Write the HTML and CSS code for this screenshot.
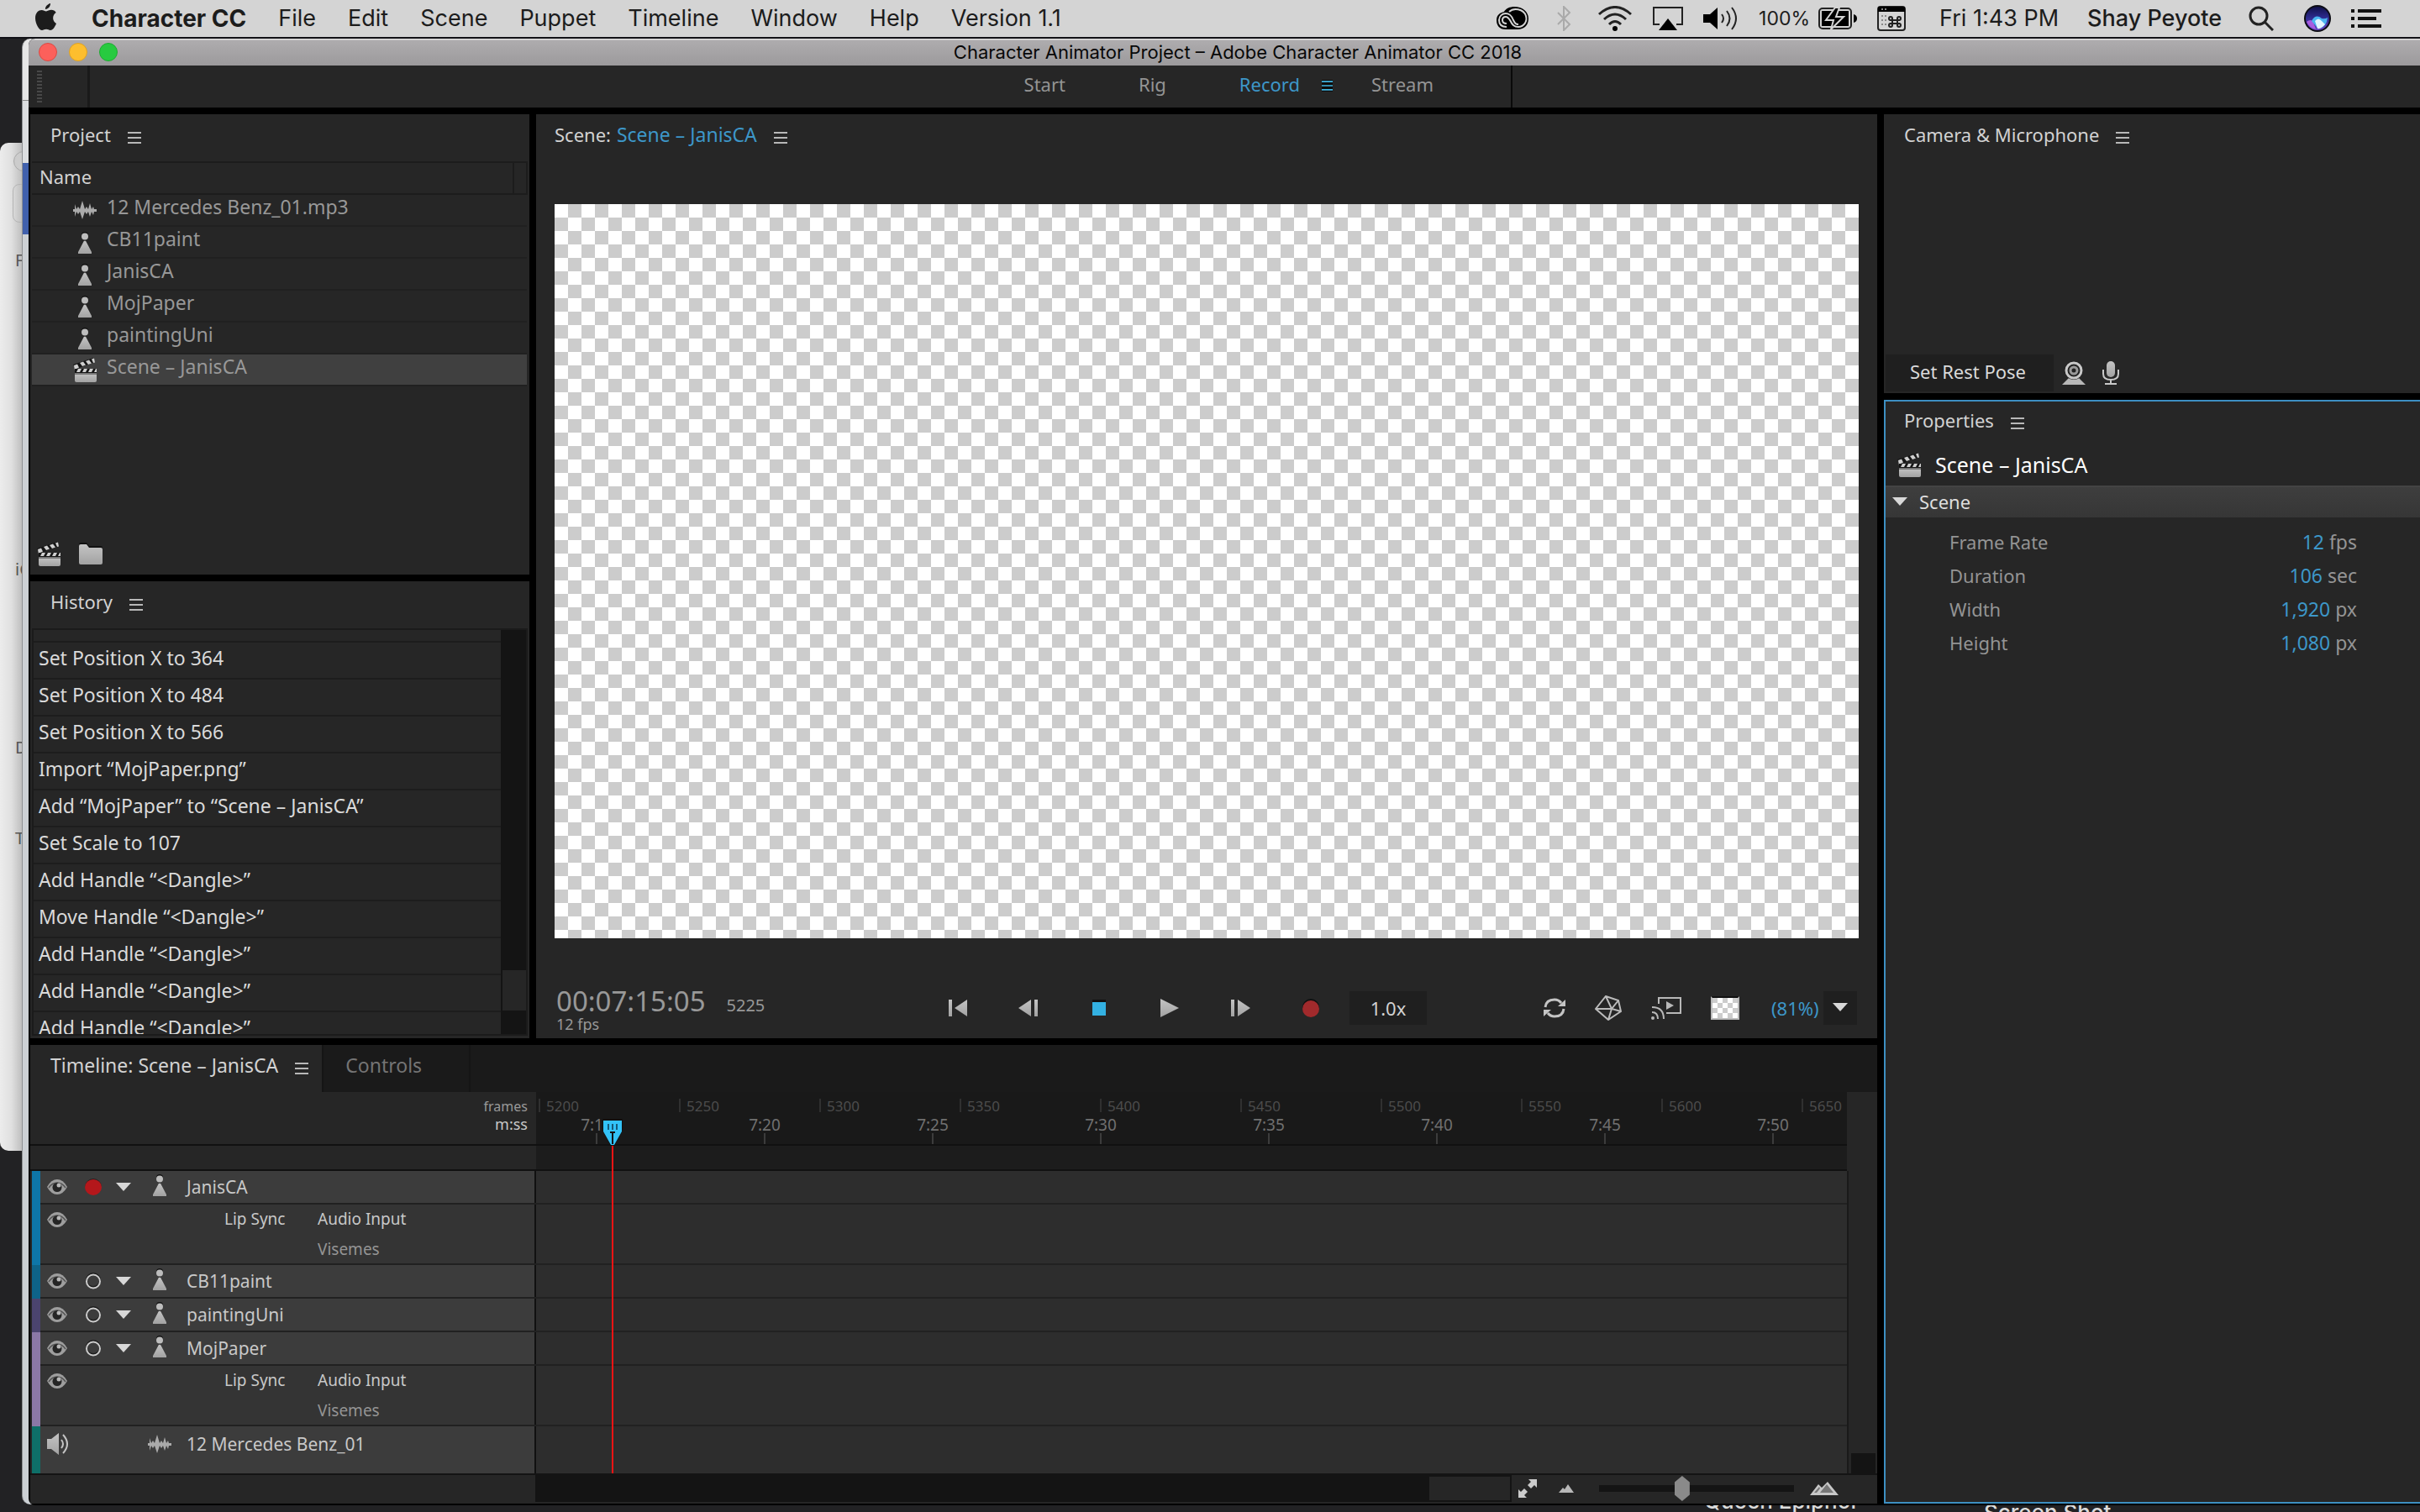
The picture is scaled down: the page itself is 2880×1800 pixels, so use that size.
FILE: index.html
```html
<!DOCTYPE html>
<html lang="en">
<head>
    <meta charset="UTF-8">
    <meta name="viewport" content="width=device-width, initial-scale=1.0">
    <title>Character Animator Project – Adobe Character Animator CC 2018</title>
    <link rel="stylesheet" href="styles.css">
</head>
<body>
<!-- Shared icons -->
<svg class="sprite" aria-hidden="true">
    <defs>
        <linearGradient id="metal" x1="0" y1="0" x2="0" y2="1">
            <stop offset="0" stop-color="#c4c4c4"/>
            <stop offset="1" stop-color="#a2a2a2"/>
        </linearGradient>
        <linearGradient id="siri" x1="0" y1="0" x2="0" y2="1">
            <stop offset="0" stop-color="#10104a"/>
            <stop offset="0.45" stop-color="#2c2a8c"/>
            <stop offset="1" stop-color="#6a48c8"/>
        </linearGradient>
    </defs>
    <symbol id="menu" viewBox="0 0 16 14">
        <path d="M0 1h16M0 7h16M0 13h16" stroke="currentColor" stroke-width="2"/>
    </symbol>
    <symbol id="puppet" viewBox="0 0 16 26">
        <circle cx="8" cy="4" r="4" fill="#111"/>
        <path d="M8 8.500L16 25H0z" fill="#151515"/>
        <circle cx="8" cy="5.500" r="4" fill="#bdbdbd"/>
        <path d="M8 10.500c1 0 1.500.8 2 2L16 24v2H0v-2l6-11.500c.5-1.200 1-2 2-2z" fill="url(#metal)"/>
    </symbol>
    <symbol id="wave" viewBox="0 0 28 22">
        <path d="M0 10h2V4l2 6 2-3 2 3 3-10 3 10 2-3 2 3 2-7 2 7 2-3 1 3h3v3h-3l-1 4-2-4-2 6-2-6-2 3-2-3-3 9-3-9-2 3-2-3-2 6v-6H0z" fill="#aaa"/>
    </symbol>
    <symbol id="clapper" viewBox="0 0 28 30">
        <path d="M0 9L24 1l2 5L4 14z" fill="#151515"/>
        <path d="M1 10l4-1.500 2 4L4 14v2H2zM8 7l4-1.500 3 4-4 1.500zM15 5l4-1.500 3 4-4 1.500zM22 2.500L25 1.500l1 5-2 .5z" fill="#d0d0d0"/>
        <path d="M2 14h26v5H2z" fill="#151515"/>
        <path d="M6 14h4l-2 4H4zM13 14h4l-2 4h-4zM20 14h4l-2 4h-4zM27 14h1v4h-3z" fill="#d0d0d0"/>
        <path d="M2 19h26v9q0 2-2 2H4q-2 0-2-2z" fill="url(#metal)"/>
        <path d="M2 19h26v2H2z" fill="#777"/>
    </symbol>
    <symbol id="eye" viewBox="0 0 24 18">
        <path d="M0 9Q5 0 12 0t12 9q-5 9-12 9T0 9z" fill="#9e9e9e"/>
        <path d="M2 10q4-6 10-6t10 6" fill="none" stroke="#555" stroke-width="1.500"/>
        <circle cx="12" cy="9.500" r="5.500" fill="#252525"/>
        <circle cx="14" cy="7" r="2.500" fill="#b8b8b8"/>
    </symbol>
    <symbol id="down" viewBox="0 0 18 10">
        <path d="M0 0h18L9 10z" fill="#d8d8d8"/>
    </symbol>
    <symbol id="ring" viewBox="0 0 20 20">
        <circle cx="10" cy="9" r="8" fill="none" stroke="#1c1c1c" stroke-width="2"/>
        <circle cx="10" cy="10.500" r="8" fill="none" stroke="#ccc" stroke-width="2"/>
    </symbol>
</svg>

<!-- Windows behind the application -->
<div class="back-window finder" aria-hidden="true">
    <i class="finder-circle"></i>
    <i class="finder-field"></i>
    <span class="fav">F</span>
    <span class="cloud">iC</span>
    <span class="dev">D</span>
    <span class="tag">T</span>
</div>
<div class="back-window browser" aria-hidden="true"></div>

<header class="menubar">
    <nav class="menus">
        <svg class="apple" viewBox="0 0 26 32"><path d="M18 0c.3 3-2.500 7-6 7C11.500 4 15 .5 18 0zM25 24c-2 5-4.500 8-7 8-2 0-2.500-1.200-5-1.200S10 32 8 32C4.500 32 0 24 0 17.500 0 11 4 8 7.500 8c2.300 0 4 1.400 5.500 1.400S16.500 7.800 19 7.800c2.400 0 4.500 1.200 5.700 3.200-5 3-4.500 10.500.3 13z"/></svg>
        <button class="strong">Character CC</button>
        <button>File</button>
        <button>Edit</button>
        <button>Scene</button>
        <button>Puppet</button>
        <button>Timeline</button>
        <button>Window</button>
        <button>Help</button>
        <button>Version 1.1</button>
    </nav>
    <div class="status">
        <svg width="42" height="30" viewBox="0 0 42 30"><path d="M13 28C5 28 2 23 2 17S6 8 11 7c2-4 7-6 12-6 10 0 17 6 17 14s-5 13-13 13z"/><g fill="none" stroke="#d4d4d4" stroke-width="2"><path d="M14 25c-6 0-9-3-9-8s4-8 8-8c5 0 7 3 9 8 2 4 3 5 6 5M17 7c5-5 17-4 20 5 2 7-3 13-9 13-5 0-7-2-10-8-2-3-3-4-5-4-3 0-4 2-4 4 0 3 2 4 5 4"/></g></svg>
        <svg width="32" height="30" viewBox="0 0 32 30"><path d="M9 8l14 14-7 7V1l7 7L9 22" fill="none" stroke="#aaa" stroke-width="2"/></svg>
        <svg width="42" height="30" viewBox="0 0 42 30"><path d="M2 10q19-17 38 0M8 16q13-12 26 0M14 22q7-7 14 0" fill="none" stroke="#222" stroke-width="3"/><circle cx="21" cy="27" r="3"/></svg>
        <svg width="36" height="30" viewBox="0 0 36 30"><path d="M8 22H1V2h34v20h-7" fill="none" stroke="#222" stroke-width="2"/><path d="M18 15l11 14H7z"/></svg>
        <svg width="42" height="32" viewBox="0 0 42 32"><path d="M0 11h8l9-8v26l-9-8H0z"/><path d="M22 11q4 5 0 10M28 7q7 9 0 18M34 3q10 13 0 26" fill="none" stroke="#222" stroke-width="2"/></svg>
        <span class="battery">100%
            <svg width="46" height="26" viewBox="0 0 46 26"><rect x="1" y="1" width="38" height="24" rx="4" fill="none" stroke="#222" stroke-width="2"/><path d="M4 4h32v18H4z"/><path d="M42 8q4 1 4 5t-4 5z"/><path d="M20 0L9 15h9l-3 11 15-15h-9l4-11z" stroke="#d4d4d4" stroke-width="2"/></svg>
        </span>
        <svg width="34" height="30" viewBox="0 0 34 30"><rect x="1" y="1" width="32" height="28" rx="3" fill="none" stroke="#222" stroke-width="2"/><path d="M1 1h32v6H1z"/><path d="M5 12h2M5 17h2M5 22h2M9 12h2M9 17h2M9 22h2M5 4h2M9 4h2" stroke="#888" stroke-width="2"/><path d="M18 15v8M24 15v8M15 17h12M15 21h12" stroke="#222" stroke-width="2"/><g fill="none" stroke="#222" stroke-width="2"><circle cx="16" cy="15" r="2"/><circle cx="26" cy="15" r="2"/><circle cx="16" cy="23" r="2"/><circle cx="26" cy="23" r="2"/></g></svg>
        <time class="clock">Fri 1:43 PM</time>
        <span class="user">Shay Peyote</span>
        <svg class="search" width="30" height="30" viewBox="0 0 30 30"><circle cx="12" cy="12" r="10" fill="none" stroke="#222" stroke-width="3"/><path d="M19 19l10 10" stroke="#222" stroke-width="3"/></svg>
        <svg width="32" height="32" viewBox="0 0 32 32"><circle cx="16" cy="16" r="16" fill="#0c0c14"/><circle cx="16" cy="16" r="14" fill="url(#siri)"/><path d="M3 20q5-4 8 0l3 9q-8-2-11-9z" fill="#a85ce0"/><path d="M9 19q5-9 12-3 4 1 7-1-1 10-9 13-3 0-5-3z" fill="#4ab4f0"/><path d="M13 19q4-5 8 0l4 4q-5 6-9 5z" fill="#e2f4ff"/></svg>
        <svg width="36" height="22" viewBox="0 0 36 22"><path d="M0 2h4M8 2h28M0 11h4M8 11h22M0 20h4M8 20h28" stroke="#111" stroke-width="4"/></svg>
    </div>
</header>

<main class="app">
    <div class="titlebar">
        <div class="lights"><i class="close"></i><i class="minimize"></i><i class="zoom"></i></div>
        <h1>Character Animator Project – Adobe Character Animator CC 2018</h1>
    </div>

    <div class="workspaces">
        <i class="grip"></i>
        <nav>
            <button>Start</button>
            <button>Rig</button>
            <button class="current">Record <svg class="menu-icon"><use href="#menu"/></svg></button>
            <button>Stream</button>
        </nav>
    </div>

    <div class="panels">
        <div class="column left-column">
            <section class="panel project">
                <h2>Project <svg class="menu-icon"><use href="#menu"/></svg></h2>
                <table>
                    <thead><tr><th>Name</th><th class="spare"></th></tr></thead>
                    <tbody>
                        <tr><td colspan="2"><div><svg><use href="#wave" height="22" y="4"/></svg>12 Mercedes Benz_01.mp3</div></td></tr>
                        <tr><td colspan="2"><div><svg><use href="#puppet" height="26" y="3"/></svg>CB11paint</div></td></tr>
                        <tr><td colspan="2"><div><svg><use href="#puppet" height="26" y="3"/></svg>JanisCA</div></td></tr>
                        <tr><td colspan="2"><div><svg><use href="#puppet" height="26" y="3"/></svg>MojPaper</div></td></tr>
                        <tr><td colspan="2"><div><svg><use href="#puppet" height="26" y="3"/></svg>paintingUni</div></td></tr>
                        <tr class="selected"><td colspan="2"><div><svg><use href="#clapper"/></svg>Scene – JanisCA</div></td></tr>
                    </tbody>
                </table>
                <div class="project-tools">
                    <button aria-label="New scene"><svg width="28" height="30"><use href="#clapper"/></svg></button>
                    <button aria-label="New folder"><svg width="28" height="26" viewBox="0 0 28 26"><path d="M0 2q0-2 2-2h7l3 4h14q2 0 2 2v3H0z" fill="#111"/><path d="M0 4q0-2 2-2h7l3 4h14q2 0 2 2v16q0 2-2 2H2q-2 0-2-2z" fill="url(#metal)"/></svg></button>
                </div>
            </section>

            <section class="panel history">
                <h2>History <svg class="menu-icon"><use href="#menu"/></svg></h2>
                <div class="history-box">
                    <ol>
                        <li class="cut"></li>
                        <li>Set Position X to 364</li>
                        <li>Set Position X to 484</li>
                        <li>Set Position X to 566</li>
                        <li>Import “MojPaper.png”</li>
                        <li>Add “MojPaper” to “Scene – JanisCA”</li>
                        <li>Set Scale to 107</li>
                        <li>Add Handle “&lt;Dangle&gt;”</li>
                        <li>Move Handle “&lt;Dangle&gt;”</li>
                        <li>Add Handle “&lt;Dangle&gt;”</li>
                        <li>Add Handle “&lt;Dangle&gt;”</li>
                        <li>Add Handle “&lt;Dangle&gt;”</li>
                    </ol>
                    <div class="scrollbar"><i></i></div>
                </div>
            </section>
        </div>

        <section class="panel scene">
            <h2>Scene: <a href="#stage">Scene – JanisCA</a> <svg class="menu-icon"><use href="#menu"/></svg></h2>
            <div class="stage" id="stage"></div>
            <div class="transport">
                <div class="timecode">
                    <div><strong>00:07:15:05</strong><small>12 fps</small></div>
                    <span>5225</span>
                </div>
                <div class="playback">
                    <button aria-label="Go to start"><svg width="24" height="22" viewBox="0 0 24 22"><path d="M1 1h4v20H1zM23 1v20L8 11z" fill="url(#metal)"/></svg></button>
                    <button aria-label="Step back"><svg width="24" height="22" viewBox="0 0 24 22"><path d="M19 1h4v20h-4zM15 1v20L0 11z" fill="url(#metal)"/></svg></button>
                    <button aria-label="Stop"><svg width="24" height="22" viewBox="0 0 24 22"><path d="M4 1h16v4H4z" fill="#111"/><path d="M4 4h16v16H4z" fill="#33b1e2"/></svg></button>
                    <button aria-label="Play"><svg width="24" height="22" viewBox="0 0 24 22"><path d="M1 0l22 11L1 22z" fill="url(#metal)"/></svg></button>
                    <button aria-label="Step forward"><svg width="24" height="22" viewBox="0 0 24 22"><path d="M1 1h4v20H1zM9 1v20l15-10z" fill="url(#metal)"/></svg></button>
                    <button aria-label="Record"><svg width="24" height="22" viewBox="0 0 24 22"><circle cx="12" cy="10" r="10" fill="#111"/><circle cx="12" cy="12" r="10" fill="#a12a2c"/></svg></button>
                    <button class="speed">1.0x</button>
                </div>
                <div class="view-tools">
                    <button aria-label="Refresh"><svg width="28" height="26" viewBox="0 0 28 26"><path d="M3 12Q4 3 14 3q5 0 8 4M25 14q-1 9-11 9-5 0-8-4" fill="none" stroke="#c4c4c4" stroke-width="3"/><path d="M27 3v8h-9zM1 23v-8h9z" fill="#c4c4c4"/></svg></button>
                    <button aria-label="Mesh"><svg width="32" height="30" viewBox="0 0 32 30"><path d="M13 1l15 5 3 13-15 10L1 16zM13 1l7 15 11 3M28 6l-8 10-4 13M1 16h19M1 16L20 16" fill="none" stroke="#bbb" stroke-width="2"/></svg></button>
                    <button aria-label="Stream output"><svg width="38" height="30" viewBox="0 0 38 30"><path d="M10 10V3h26v18H19" fill="none" stroke="#b8b8b8" stroke-width="2"/><path d="M19 7l9 5-9 5z" fill="#b8b8b8"/><path d="M2 20q7 0 7 8M2 14q14 0 14 14" fill="none" stroke="#b8b8b8" stroke-width="2"/><circle cx="3" cy="27" r="2" fill="#b8b8b8"/></svg></button>
                    <button aria-label="Toggle transparency"><i class="checker"></i></button>
                    <label class="scale">
                        <select aria-label="Scene zoom"><option>(81%)</option></select>
                        <svg width="18" height="10"><use href="#down"/></svg>
                    </label>
                </div>
            </div>
        </section>

        <section class="timeline">
            <div class="tabs">
                <h2 class="tab active">Timeline: Scene – JanisCA <svg class="menu-icon"><use href="#menu"/></svg></h2>
                <button class="tab">Controls</button>
            </div>
            <div class="time-area">
                <div class="ruler">
                    <div class="units"><span>frames</span><b>m:ss</b></div>
                    <div class="scale-marks">
                        <div class="frames"><span>5200</span><span>5250</span><span>5300</span><span>5350</span><span>5400</span><span>5450</span><span>5500</span><span>5550</span><span>5600</span><span>5650</span></div>
                        <div class="minutes"><span>7:15</span><span>7:20</span><span>7:25</span><span>7:30</span><span>7:35</span><span>7:40</span><span>7:45</span><span>7:50</span></div>
                    </div>
                </div>
                <div class="work-area"><i></i></div>
                <div class="tracks">
                    <div class="track-list">
                        <div class="track blue">
                            <div class="head"><svg class="eye"><use href="#eye"/></svg><i class="armed"></i><svg class="arrow"><use href="#down"/></svg><svg class="kind"><use href="#puppet"/></svg>JanisCA</div>
                            <div class="sub"><svg class="eye"><use href="#eye"/></svg><span>Lip Sync</span><p>Audio Input<em>Visemes</em></p></div>
                        </div>
                        <div class="track teal">
                            <div class="head"><svg class="eye"><use href="#eye"/></svg><svg class="ring"><use href="#ring"/></svg><svg class="arrow"><use href="#down"/></svg><svg class="kind"><use href="#puppet"/></svg>CB11paint</div>
                        </div>
                        <div class="track indigo">
                            <div class="head"><svg class="eye"><use href="#eye"/></svg><svg class="ring"><use href="#ring"/></svg><svg class="arrow"><use href="#down"/></svg><svg class="kind"><use href="#puppet"/></svg>paintingUni</div>
                        </div>
                        <div class="track lilac">
                            <div class="head"><svg class="eye"><use href="#eye"/></svg><svg class="ring"><use href="#ring"/></svg><svg class="arrow"><use href="#down"/></svg><svg class="kind"><use href="#puppet"/></svg>MojPaper</div>
                            <div class="sub"><svg class="eye"><use href="#eye"/></svg><span>Lip Sync</span><p>Audio Input<em>Visemes</em></p></div>
                        </div>
                        <div class="track green">
                            <div class="head audio"><svg class="speaker" viewBox="0 0 28 26"><path d="M0 7h5l9-7v26l-9-7H0z" fill="url(#metal)"/><path d="M17 8q4 5 0 10M19 2q10 11 0 22" fill="none" stroke="#c4c4c4" stroke-width="2"/></svg><svg class="kind wave"><use href="#wave"/></svg>12 Mercedes Benz_01</div>
                        </div>
                    </div>
                    <div class="v-scroll"><i></i></div>
                </div>
                <svg class="playhead" viewBox="0 0 24 422"><path d="M0 0h24v14L14 32h-4L0 14z" fill="#111"/><path d="M1 2h22v13l-9 16h-4L1 15z" fill="#33c3f8"/><path d="M7 6v7M12 6v7M17 6v7" stroke="#155a78" stroke-width="2"/><path d="M9 16h6M12 16v14" stroke="#111" stroke-width="2"/><path d="M11 32h2v390h-2z" fill="#f01414"/></svg>
            </div>
            <div class="time-footer">
                <div class="h-scroll"><i></i></div>
                <button aria-label="Fit timeline"><svg width="22" height="22" viewBox="0 0 22 22"><path d="M12 0h10v10l-3-3-4 4-4-4 4-4zM10 22H0V12l3 3 4-4 4 4-4 4z" fill="#ccc"/></svg></button>
                <svg width="18" height="10" viewBox="0 0 18 10"><path d="M0 10l5-6 2 2 4-6 7 10z" fill="#b8b8b8"/></svg>
                <input type="range" min="0" max="100" value="42" aria-label="Timeline zoom">
                <svg width="34" height="16" viewBox="0 0 34 16"><path d="M0 16L10 3l4 4 7-7 13 16z" fill="#c8c8c8"/><path d="M5 13l6-7 1 2-4 5zM12 13l8-10 8 10z" fill="#777"/></svg>
            </div>
        </section>

        <div class="column right-column">
            <section class="panel camera">
                <h2>Camera &amp; Microphone <svg class="menu-icon"><use href="#menu"/></svg></h2>
                <div class="camera-tools">
                    <button class="rest-pose">Set Rest Pose</button>
                    <button aria-label="Camera"><svg width="28" height="28" viewBox="0 0 28 28"><path d="M8 20h12l8 8H0z" fill="#b8b8b8"/><circle cx="14" cy="11" r="11" fill="#222"/><circle cx="14" cy="11" r="9" fill="none" stroke="#c8c8c8" stroke-width="3"/><circle cx="14" cy="11" r="4" fill="none" stroke="#999" stroke-width="3"/></svg></button>
                    <button aria-label="Microphone"><svg width="20" height="28" viewBox="0 0 20 28"><rect x="5" y="0" width="10" height="19" rx="5" fill="url(#metal)"/><path d="M1 10v5q0 7 9 7t9-7v-5M10 22v5M3 27h14" fill="none" stroke="#c8c8c8" stroke-width="2"/></svg></button>
                </div>
            </section>

            <section class="panel properties">
                <h2>Properties <svg class="menu-icon"><use href="#menu"/></svg></h2>
                <div class="item-name"><svg width="28" height="30"><use href="#clapper"/></svg>Scene – JanisCA</div>
                <h3><svg width="18" height="10"><use href="#down"/></svg>Scene</h3>
                <dl>
                    <div><dt>Frame Rate</dt><dd><b>12</b> fps</dd></div>
                    <div><dt>Duration</dt><dd><b>106</b> sec</dd></div>
                    <div><dt>Width</dt><dd><b>1,920</b> px</dd></div>
                    <div><dt>Height</dt><dd><b>1,080</b> px</dd></div>
                </dl>
            </section>
        </div>
    </div>
</main>

<!-- Desktop file names below the window -->
<span class="file-name queen">Queen Epiphor</span>
<span class="file-name shot">Screen Shot</span>
</body>
</html>
```

FILE: styles.css
```css
* {
    box-sizing: border-box;
}

body {
    margin: 0;
    height: 100vh;
    overflow: hidden;
    position: relative;
    display: flex;
    flex-direction: column;
    background: #222224;
    color: #d2d2d2;
    font-family: "Noto Sans", "Open Sans", sans-serif;
    font-size: 22px;
    line-height: 28px;
}

h1, h2, h3, p, ol, dl, dd {
    margin: 0;
    padding: 0;
    font-weight: normal;
    font-size: inherit;
}

button, select {
    border: 0;
    padding: 0;
    background: none;
    color: inherit;
    font: inherit;
    cursor: pointer;
}

svg {
    display: block;
    flex: none;
}

i {
    display: block;
    flex: none;
}

.sprite {
    position: absolute;
    width: 0;
    height: 0;
}

/* macOS menu bar */
.menubar {
    height: 46px;
    flex: none;
    display: flex;
    justify-content: space-between;
    align-items: center;
    padding: 0 46px 0 42px;
    background: #d4d4d4;
    border-bottom: 2px solid #111116;
    color: #1c1c1c;
    font-family: Inter, sans-serif;
    font-size: 27px;
    white-space: nowrap;
    position: relative;
    z-index: 2;
}

.menus {
    display: flex;
    align-items: center;
    gap: 38px;
}

.apple {
    width: 26px;
    height: 32px;
    margin: 0 3px 4px 0;
    fill: #1c1c1c;
}

.strong {
    font-size: 28px;
    font-weight: 700;
}

.status {
    display: flex;
    align-items: center;
    gap: 24px;
}

.battery {
    display: flex;
    align-items: center;
    gap: 10px;
    font-size: 23px;
}

.clock {
    margin: 0 10px 0 16px;
}

.user {
    font-weight: 500;
}

.search {
    margin: 0 12px 0 8px;
}

/* Windows behind the application */
.back-window {
    position: absolute;
    overflow: hidden;
}

.finder {
    left: 0;
    top: 170px;
    width: 27px;
    height: 1200px;
    border-radius: 10px 0 0 10px;
    background: linear-gradient(90deg, #ececec, #e0e0e0 50%, #bcbcbc);
    color: #555;
    font-size: 20px;
}

.finder span {
    position: absolute;
    left: 18px;
}

.finder-circle {
    position: absolute;
    left: 16px;
    top: 10px;
    width: 24px;
    height: 24px;
    border: 1px solid #aaa;
    border-radius: 50%;
    background: #ccc;
}

.finder-field {
    position: absolute;
    left: 15px;
    top: 49px;
    width: 30px;
    height: 46px;
    border: 1px solid #b4b4b4;
    border-radius: 8px;
}

.fav { top: 126px; }
.cloud { top: 494px; }
.dev { top: 706px; }
.tag { top: 814px; }

.browser {
    left: 26px;
    top: 46px;
    width: 20px;
    bottom: 9px;
    border-radius: 10px;
    border-left: 1px solid #8e9092;
    background: linear-gradient(#e6e6e6 73px, #888 73px, #888 74px, #dcdee0 74px, #dcdee0 148px, #4060ac 148px, #4060ac 233px, #ccd0d4 233px);
}

/* Application window */
.app {
    flex: 1;
    min-height: 0;
    margin: 0 0 8px 34px;
    display: flex;
    flex-direction: column;
    background: #000;
    border-radius: 8px 0 0 8px;
    overflow: hidden;
    position: relative;
    z-index: 1;
}

.titlebar {
    flex: none;
    height: 32px;
    display: grid;
    grid-template-columns: 1fr auto 1fr;
    align-items: center;
    padding-left: 12px;
    background: linear-gradient(#e2e2e2 1px, #aeacae 2px, #9c9a9c);
    color: #080808;
    font-family: Inter, sans-serif;
    font-size: 22px;
}

.titlebar h1 {
    padding-left: 20px;
}

.lights {
    display: flex;
    gap: 14px;
}

.lights i {
    width: 22px;
    height: 22px;
    border-radius: 50%;
}

.close {
    background: #fc605b;
    border: 1px solid #dc4843;
}

.minimize {
    background: #fdbe2e;
    border: 1px solid #dea123;
}

.zoom {
    background: #27ca40;
    border: 1px solid #1eab32;
}

.workspaces {
    flex: none;
    height: 50px;
    margin-bottom: 8px;
    display: flex;
    background: #262626;
    color: #949494;
}

.grip {
    width: 6px;
    height: 38px;
    margin: 6px 0 0 10px;
    background: repeating-linear-gradient(#484848 0 2px, transparent 2px 4px);
}

.workspaces nav {
    width: 1696px;
    margin-left: 54px;
    padding: 0 92px 6px 0;
    border-left: 3px solid #1a1a1a;
    border-right: 2px solid #0a0a0a;
    display: flex;
    justify-content: flex-end;
    align-items: center;
    gap: 87px;
}

.workspaces .current {
    display: flex;
    align-items: center;
    gap: 26px;
    margin-right: -41px;
    color: #3d97c9;
}

.current .menu-icon {
    width: 13px;
    margin: 4px 0 0;
    background: #0c0c0c;
    color: #40b4e0;
}

.panels {
    flex: 1;
    min-height: 0;
    display: grid;
    grid-template-columns: 594px minmax(0, 1fr) 638px;
    grid-template-rows: minmax(0, 1fr) 546px;
    gap: 8px;
    padding: 0 0 2px 2px;
}

.column {
    display: flex;
    flex-direction: column;
    gap: 8px;
    min-height: 0;
}

.panel {
    display: flex;
    flex-direction: column;
    background: #262626;
    min-height: 0;
}

.panel h2 {
    flex: none;
    display: flex;
    align-items: center;
    gap: 7px;
    padding: 10px 22px 18px 24px;
    white-space: nowrap;
}

.menu-icon {
    width: 16px;
    height: 14px;
    margin: 8px 0 0 13px;
    color: #b8b8b8;
}

a {
    color: #3d97c9;
    text-decoration: none;
}

/* Project panel */
.project {
    flex: 548;
}

.project table {
    margin: 0 2px;
    border-collapse: collapse;
    table-layout: fixed;
}

.project th {
    height: 38px;
    padding: 0 9px 5px;
    border: 2px solid #1c1c1c;
    border-left: 0;
    font-weight: normal;
    text-align: left;
}

.project .spare {
    width: 16px;
    padding: 0;
}

.project td {
    padding: 0;
    border-bottom: 2px solid #202020;
}

.project td div {
    height: 36px;
    display: flex;
    align-items: center;
    gap: 12px;
    padding: 0 0 9px 49px;
    font-size: 23px;
    color: #989898;
}

.project td svg {
    width: 28px;
    height: 30px;
    margin-top: 8px;
}

.project .selected {
    background: #404040;
}

.project-tools {
    display: flex;
    align-items: center;
    gap: 22px;
    margin-top: auto;
    padding: 0 0 10px 8px;
}

/* History panel */
.history {
    flex: 544;
}

.history-box {
    flex: 1;
    min-height: 0;
    display: flex;
    margin: 0 2px 3px;
    border: 2px solid #1b1b1b;
    overflow: hidden;
}

.history ol {
    flex: 1;
    list-style: none;
    font-size: 23px;
    color: #dadada;
}

.history li {
    height: 44px;
    padding: 4px 6px;
    border-bottom: 2px solid #1d1d1d;
}

.history .cut {
    height: 15px;
}

.scrollbar {
    width: 30px;
    padding-left: 2px;
    background: #141414;
    display: flex;
    flex-direction: column;
    justify-content: flex-end;
}

.scrollbar i {
    height: 48px;
    margin-bottom: 28px;
    background: #262626;
}

/* Scene panel */
.scene h2 {
    padding-left: 22px;
}

.scene h2 a {
    font-size: 23px;
}

.stage {
    flex: 1;
    min-height: 0;
    margin: 51px 22px 0;
    background: repeating-conic-gradient(#ccc 0 25%, #fff 0 50%) 0 0 / 32px 32px;
}

.transport {
    flex: none;
    height: 119px;
    display: grid;
    grid-template-columns: 1fr auto 1fr;
    align-items: center;
    padding: 46px 24px 0;
}

.timecode {
    display: flex;
    gap: 25px;
    margin-top: 4px;
    color: #989898;
    font-size: 20px;
    line-height: 24px;
}

.timecode strong {
    display: block;
    font-weight: normal;
    font-size: 33px;
    line-height: 34px;
}

.timecode small {
    font-size: 18px;
    line-height: 20px;
    display: block;
}

.timecode span {
    padding-top: 10px;
}

.playback {
    display: flex;
    align-items: center;
    gap: 60px;
    margin-right: 46px;
}

.speed {
    width: 92px;
    height: 40px;
    margin-left: -26px;
    background: #1f1f1f;
}

.view-tools {
    display: flex;
    align-items: center;
    justify-content: flex-end;
    gap: 34px;
}

.checker {
    width: 34px;
    height: 28px;
    border: 2px solid #bbb;
    border-top-color: #111;
    background: repeating-conic-gradient(#fff 0 25%, #ccc 0 50%) 0 0 / 12px 12px;
}

.scale {
    position: relative;
    margin-left: 4px;
}

.scale select {
    appearance: none;
    height: 40px;
    padding-right: 45px;
    color: #3d97c9;
    background: linear-gradient(#1f1f1f, #1f1f1f) right / 40px 40px no-repeat;
}

.scale svg {
    position: absolute;
    right: 11px;
    top: 14px;
    pointer-events: none;
}

/* Timeline */
.timeline {
    grid-column: 1 / 3;
    grid-row: 2;
    display: flex;
    flex-direction: column;
    background: #262626;
}

.right-column {
    grid-column: 3;
    grid-row: 1 / 3;
}

.tabs {
    flex: none;
    height: 56px;
    display: flex;
    background: #1a1a1a;
}

.tab {
    display: flex;
    align-items: center;
    gap: 7px;
    padding: 0 56px 8px 26px;
    border-right: 2px solid #151515;
    font-size: 23px;
    color: #747474;
}

.tab.active {
    padding: 0 16px 8px 24px;
    background: #262626;
    color: #d2d2d2;
}

.time-area {
    position: relative;
}

.ruler {
    height: 64px;
    display: grid;
    grid-template-columns: 602px minmax(0, 1fr);
    margin-right: 36px;
    border-bottom: 2px solid #111;
}

.units {
    padding: 7px 10px 0 0;
    text-align: right;
    font-size: 18px;
    line-height: 21px;
    color: #989898;
}

.units span, .units b {
    display: block;
    font-weight: normal;
}

.units span {
    font-size: 16px;
}

.units b {
    color: #c8c8c8;
}

.scale-marks {
    overflow: hidden;
    background: #191919;
    font-size: 17px;
    line-height: 20px;
}

.frames {
    display: flex;
    margin: 8px 0 0 3px;
    color: #4c4c4c;
}

.frames span {
    flex: 0 0 167px;
    height: 16px;
    line-height: 18px;
    padding-left: 7px;
    border-left: 2px solid #303030;
}

.minutes {
    display: flex;
    margin: 5px 0 0 -28px;
    color: #707070;
    font-size: 19px;
}

.minutes span {
    flex: 0 0 200px;
    text-align: center;
}

.minutes span::after {
    content: "";
    display: block;
    width: 2px;
    height: 13px;
    margin: 0 auto;
    background: #3c3c3c;
}

.work-area {
    height: 30px;
    margin-right: 36px;
    padding-left: 602px;
    border-bottom: 2px solid #111;
}

.work-area i {
    height: 28px;
    background: #1c1c1c;
}

.tracks {
    display: flex;
    border-bottom: 2px solid #141414;
}

.track-list {
    flex: 1;
    background: linear-gradient(90deg, transparent 600px, #111 600px, #111 602px, #2d2d2d 602px);
}

.track {
    padding: 0;
    border-left: 10px solid;
    margin-left: 2px;
}

.blue { border-color: #0e76a8; }
.teal { border-color: #0e6388; }
.indigo { border-color: #4b446e; }
.lilac { border-color: #8b78a6; }
.green { border-color: #0e6f68; }

.head, .sub {
    display: flex;
    height: 40px;
    border-bottom: 2px solid #212121;
    background: linear-gradient(90deg, #3c3c3c 588px, transparent 588px);
}

.head {
    align-items: center;
    font-size: 21px;
    color: #c8c8c8;
}

.eye {
    width: 24px;
    height: 18px;
    margin: 0 21px 0 8px;
}

.ring, .armed {
    width: 20px;
    height: 20px;
    margin-right: 17px;
}

.armed {
    border-radius: 50%;
    background: #b4171b;
    border-top: 1px solid #222;
}

.arrow {
    width: 18px;
    height: 10px;
    margin-right: 26px;
}

.kind {
    width: 16px;
    height: 26px;
    margin: 0 24px 4px 0;
}

.sub {
    height: 72px;
    padding-top: 3px;
    background: linear-gradient(90deg, #343434 588px, transparent 588px);
    font-size: 19px;
    color: #c8c8c8;
}

.sub .eye {
    margin: 6px 187px 0 8px;
}

.sub span {
    width: 111px;
}

.sub em {
    display: block;
    margin-top: 8px;
    font-style: normal;
    color: #949494;
}

.audio {
    height: 56px;
    padding-bottom: 15px;
    border-bottom: 0;
}

.speaker {
    width: 28px;
    height: 26px;
    margin: 0 92px 0 8px;
}

.kind.wave {
    width: 28px;
    height: 22px;
    margin: 0 18px 0 0;
}

.v-scroll {
    width: 36px;
    padding: 0 2px 0 3px;
    border-left: 2px solid #1a1a1a;
    display: flex;
    flex-direction: column;
    justify-content: flex-end;
}

.v-scroll i {
    height: 24px;
    background: #141414;
}

.playhead {
    position: absolute;
    left: 681px;
    top: 32px;
    width: 24px;
    height: 422px;
}

.time-footer {
    flex: 1;
    display: flex;
    align-items: center;
    gap: 26px;
    padding: 0 46px 2px 601px;
}

.h-scroll {
    flex: 1;
    height: 32px;
    margin-right: -18px;
    padding: 2px;
    background: #141414;
    display: flex;
    justify-content: flex-end;
}

.h-scroll i {
    width: 96px;
    background: #262626;
}

.time-footer input {
    appearance: none;
    width: 232px;
    height: 30px;
    margin: 0 -7px 0 4px;
    background: linear-gradient(#141414, #141414) center / 100% 8px no-repeat;
}

.time-footer input::-webkit-slider-thumb {
    appearance: none;
    width: 18px;
    height: 30px;
    background: #8a8a8a;
    clip-path: polygon(50% 0, 100% 25%, 100% 75%, 50% 100%, 0 75%, 0 25%);
}

/* Camera and properties */
.camera {
    flex: 0 0 332px;
}

.camera-tools {
    display: flex;
    align-items: center;
    gap: 20px;
    margin-top: auto;
    padding: 0 2px 2px;
}

.rest-pose {
    width: 200px;
    height: 44px;
    margin-right: -10px;
    padding: 0 4px 4px 0;
    background: #1f1f1f;
    color: #dadada;
}

.properties {
    flex: 1;
    border: 2px solid #3d8fc2;
    border-right: 0;
}

.properties h2 {
    padding: 8px 22px 18px;
}

.item-name {
    display: flex;
    align-items: center;
    gap: 17px;
    padding: 3px 14px 7px;
    color: #fff;
    font-size: 25px;
    line-height: 36px;
}

.properties h3 {
    height: 38px;
    display: flex;
    align-items: center;
    gap: 14px;
    padding: 0 8px 2px;
    border-top: 2px solid #444;
    background: linear-gradient(#3e3e3e, #363636);
    color: #dedede;
}

.properties dl {
    padding: 9px 75px 0 76px;
    color: #949494;
}

.properties dl div {
    display: flex;
    justify-content: space-between;
    height: 40px;
    align-items: center;
}

.properties dd {
    font-size: 23px;
}

.properties b {
    font-weight: normal;
    color: #3d97c9;
}

/* Desktop labels */
.file-name {
    position: absolute;
    color: #dcdcdc;
    font-family: Inter, sans-serif;
    font-weight: 500;
    font-size: 26px;
    line-height: 28px;
}

.queen {
    left: 2028px;
    bottom: -1px;
}

.shot {
    left: 2361px;
    bottom: -15px;
}
```
